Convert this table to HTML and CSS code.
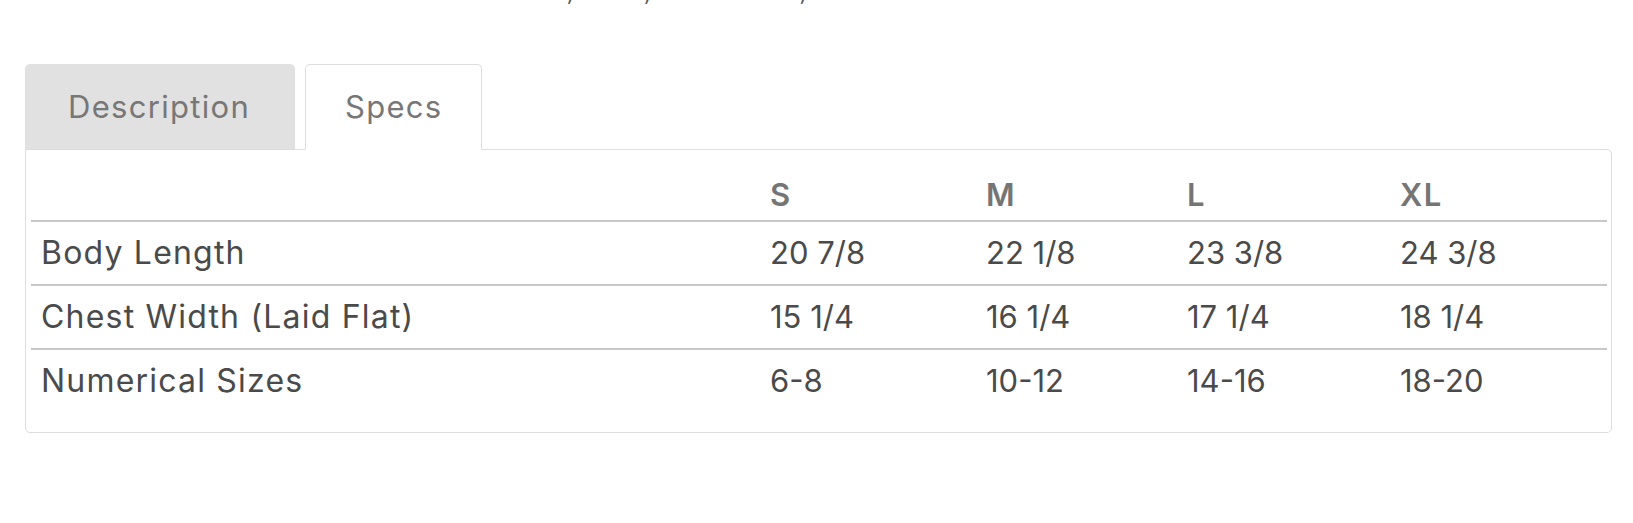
FILE: index.html
```html
<!DOCTYPE html>
<html lang="en">
<head>
<meta charset="utf-8">
<title>Specs</title>
<link rel="stylesheet" href="styles.css">
</head>
<body>
<div class="page">
  <p class="note">Available in White, Black, Heather Red, Sand</p>
  <ul class="tabs">
    <li class="tab">Description</li>
    <li class="tab tab-active">Specs</li>
  </ul>
  <div class="panel">
    <table class="specs">
      <colgroup>
        <col class="col-label">
        <col class="col-s">
        <col class="col-m">
        <col class="col-l">
        <col class="col-xl">
      </colgroup>
      <thead>
        <tr><th></th><th>S</th><th>M</th><th>L</th><th>XL</th></tr>
      </thead>
      <tbody>
        <tr><td class="label">Body Length</td><td>20 7/8</td><td>22 1/8</td><td>23 3/8</td><td>24 3/8</td></tr>
        <tr><td class="label">Chest Width (Laid Flat)</td><td>15 1/4</td><td>16 1/4</td><td>17 1/4</td><td>18 1/4</td></tr>
        <tr><td class="label">Numerical Sizes</td><td>6-8</td><td>10-12</td><td>14-16</td><td>18-20</td></tr>
      </tbody>
    </table>
  </div>
</div>
</body>
</html>
```

FILE: styles.css
```css
html, body {
  margin: 0;
  padding: 0;
  background: #ffffff;
}

body {
  font-family: "Inter", "Open Sans", "DejaVu Sans", sans-serif;
  color: #4a4a4a;
  overflow: hidden;
}

.page {
  padding: 0 21px 0 25px;
}

.note {
  margin: -21px 0 0 340px;
  font-size: 22px;
  line-height: 26px;
  font-style: italic;
  letter-spacing: 1px;
  color: #555;
  white-space: nowrap;
}

.tabs {
  list-style: none;
  margin: 59px 0 0;
  padding: 0;
  display: flex;
  align-items: flex-start;
  gap: 10px;
}

.tab {
  padding: 0 44px 0 42px;
  font-size: 31px;
  letter-spacing: 1.3px;
  line-height: 84px;
  color: #777777;
  background: #e1e1e1;
  border: 1px solid #e1e1e1;
  border-bottom: 0;
  border-radius: 5px 5px 0 0;
}

.tab-active {
  position: relative;
  background: #ffffff;
  border-color: #dddddd;
  border-bottom: 1px solid #ffffff;
  margin-bottom: -1px;
  padding: 0 38px 0 39px;
}

.panel {
  border: 1px solid #dddddd;
  border-radius: 0 5px 5px 5px;
  padding: 4px 4px 20px 5px;
}

.specs {
  width: 100%;
  border-collapse: collapse;
  table-layout: fixed;
}

.col-label { width: 729px; }
.col-s { width: 216px; }
.col-m { width: 201px; }
.col-l { width: 213px; }
.col-xl { width: auto; }

.specs th,
.specs td {
  text-align: left;
  padding: 10px;
  line-height: 42px;
  white-space: nowrap;
}

.specs th {
  padding: 20px 10px 4px;
  font-size: 31px;
  font-weight: 600;
  letter-spacing: 1.5px;
  color: #757575;
  vertical-align: bottom;
  border-bottom: 2px solid #c8c8c8;
}

.specs td {
  font-size: 31px;
  font-weight: 400;
  color: #4a4a4a;
}

.specs td.label {
  font-size: 32px;
  letter-spacing: 1.2px;
}

.specs tbody tr + tr td {
  border-top: 2px solid #c8c8c8;
}
```
